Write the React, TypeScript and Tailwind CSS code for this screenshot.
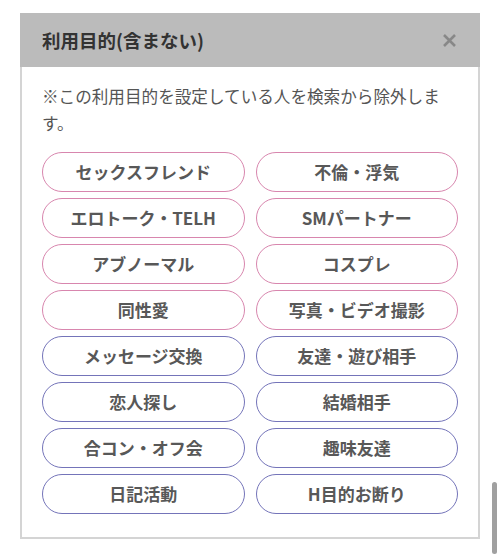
import React from "react";

const pink = ["セックスフレンド", "不倫・浮気", "エロトーク・TELH", "SMパートナー", "アブノーマル", "コスプレ", "同性愛", "写真・ビデオ撮影"];
const purple = ["メッセージ交換", "友達・遊び相手", "恋人探し", "結婚相手", "合コン・オフ会", "趣味友達", "日記活動", "H目的お断り"];

export default function App() {
  return (
    <div
      className="w-[500px] h-[554px] bg-white relative overflow-hidden"
      style={{ fontFamily: '"Noto Sans CJK JP", "Noto Sans", sans-serif' }}
    >
      <div className="pt-[13px] pl-[20px]">
        <div className="w-[460px] h-[526px] border-2 border-[#d4d4d4] border-t-0 flex flex-col">
          <div className="h-[54px] bg-[#bbbbbb] -mx-[2px] flex items-center justify-between pl-[22px] pr-[22px]">
            <span className="text-[18.5px] font-bold text-[#333] leading-none">利用目的(含まない)</span>
            <svg width="15" height="15" viewBox="0 0 15 15" className="mr-[1px]">
              <path d="M2 2 L13 13 M13 2 L2 13" stroke="#888888" strokeWidth="2.6" strokeLinecap="butt" />
            </svg>
          </div>
          <div className="px-[20px] pt-[16px]">
            <p className="text-[16.6px] leading-[27px] text-[#555] pr-[10px]">
              ※この利用目的を設定している人を検索から除外します。
            </p>
            <div className="grid grid-cols-2 gap-x-[11px] gap-y-[6px] mt-[15px]">
              {pink.map((t) => (
                <div
                  key={t}
                  className="h-[40px] rounded-full border-[1.5px] border-[#d886ae] flex items-center justify-center text-[17px] font-bold text-[#585858]"
                >
                  {t}
                </div>
              ))}
              {purple.map((t) => (
                <div
                  key={t}
                  className="h-[40px] rounded-full border-[1.5px] border-[#7474b9] flex items-center justify-center text-[17px] font-bold text-[#585858]"
                >
                  {t}
                </div>
              ))}
            </div>
          </div>
        </div>
      </div>
      <div className="absolute left-[492px] top-[482px] w-[5px] h-[72px] bg-[#a0a0a0] rounded-sm" />
    </div>
  );
}
